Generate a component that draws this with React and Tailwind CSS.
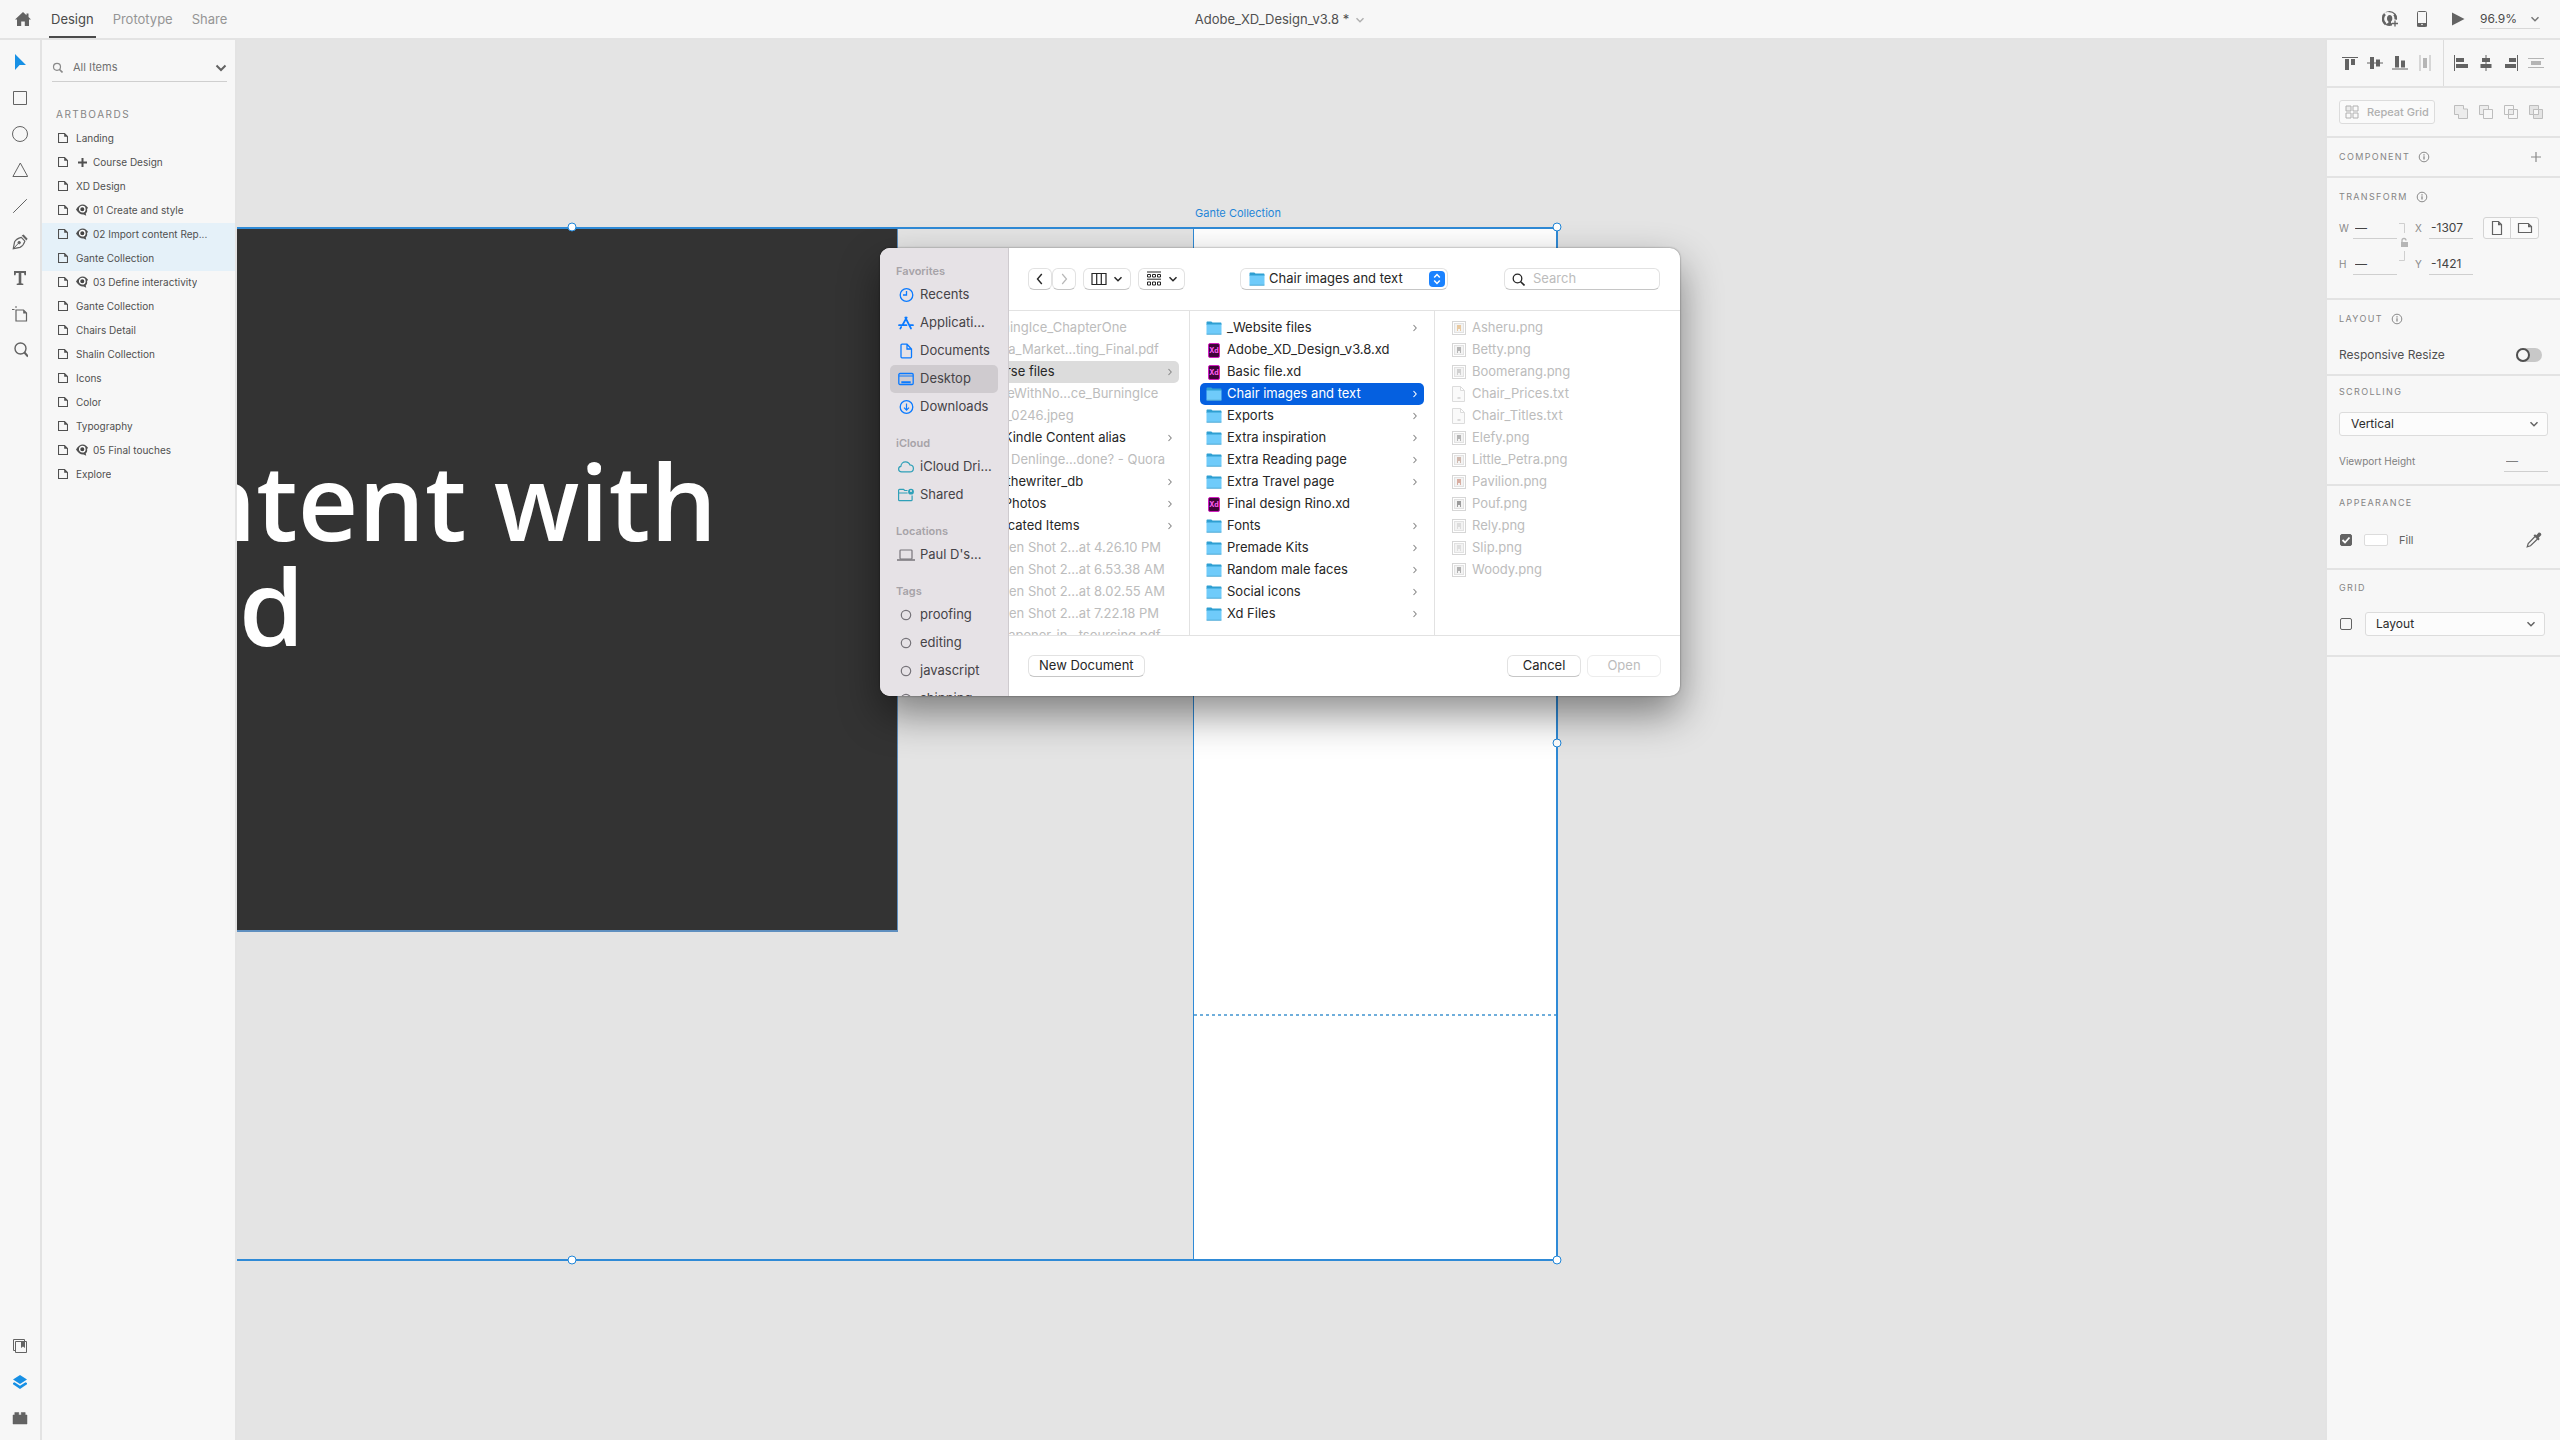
import React, { useState } from "react";

const tools = ["select", "rect", "ellipse", "polygon", "line", "pen", "text", "artboard", "zoom"];

const artboards = [
    { name: "Landing" },
    { name: "Course Design", mark: "plus" },
    { name: "XD Design" },
    { name: "01 Create and style", mark: "eye" },
    { name: "02 Import content Rep...", mark: "eye", selected: true },
    { name: "Gante Collection", selected: true },
    { name: "03 Define interactivity", mark: "eye" },
    { name: "Gante Collection" },
    { name: "Chairs Detail" },
    { name: "Shalin Collection" },
    { name: "Icons" },
    { name: "Color" },
    { name: "Typography" },
    { name: "05 Final touches", mark: "eye" },
    { name: "Explore" },
];

const sidebar = [
    {
        title: "Favorites",
        items: [
            { name: "Recents", icon: "clock" },
            { name: "Applicati...", icon: "apps" },
            { name: "Documents", icon: "doc" },
            { name: "Desktop", icon: "desktop" },
            { name: "Downloads", icon: "download" },
        ],
    },
    {
        title: "iCloud",
        items: [
            { name: "iCloud Dri...", icon: "cloud" },
            { name: "Shared", icon: "shared" },
        ],
    },
    { title: "Locations", items: [{ name: "Paul D's...", icon: "laptop" }] },
    {
        title: "Tags",
        items: [
            { name: "proofing", icon: "tag" },
            { name: "editing", icon: "tag" },
            { name: "javascript", icon: "tag" },
            { name: "shipping", icon: "tag" },
        ],
    },
];

const desktopFiles = [
    { name: "BurningIce_ChapterOne" },
    { name: "Mega_Market...ting_Final.pdf" },
    { name: "Course files", folder: true, open: true },
    { name: "TameWithNo...ce_BurningIce" },
    { name: "IMG_0246.jpeg" },
    { name: "My Kindle Content alias", folder: true },
    { name: "Paul Denlinge...done? - Quora" },
    { name: "samthewriter_db", folder: true },
    { name: "My Photos", folder: true },
    { name: "Relocated Items", folder: true },
    { name: "Screen Shot 2...at 4.26.10 PM" },
    { name: "Screen Shot 2...at 6.53.38 AM" },
    { name: "Screen Shot 2...at 8.02.55 AM" },
    { name: "Screen Shot 2...at 7.22.18 PM" },
    { name: "Singapener-in...tsourcing.pdf" },
];

const courseFiles = [
    "_Website files",
    "Adobe_XD_Design_v3.8.xd",
    "Basic file.xd",
    "Chair images and text",
    "Exports",
    "Extra inspiration",
    "Extra Reading page",
    "Extra Travel page",
    "Final design Rino.xd",
    "Fonts",
    "Premade Kits",
    "Random male faces",
    "Social icons",
    "Xd Files",
];

const chairFiles = [
    { name: "Asheru.png", tint: "#e8c9a0" },
    { name: "Betty.png", tint: "#b5b5b5" },
    { name: "Boomerang.png", tint: "#d0d0d0" },
    { name: "Chair_Prices.txt" },
    { name: "Chair_Titles.txt" },
    { name: "Elefy.png", tint: "#b5b5b5" },
    { name: "Little_Petra.png", tint: "#cfb8ae" },
    { name: "Pavilion.png", tint: "#d8aea2" },
    { name: "Pouf.png", tint: "#9c9c9c" },
    { name: "Rely.png", tint: "#dcdcdc" },
    { name: "Slip.png", tint: "#dedede" },
    { name: "Woody.png", tint: "#b0b0b0" },
];

const handles = [
    "left-[335px] top-[187px]",
    "left-[1320px] top-[187px]",
    "left-[1320px] top-[703px]",
    "left-[335px] top-[1220px]",
    "left-[1320px] top-[1220px]",
];

function Svg({ size = 16, box = 16, className = "", children }) {
    return (
        <svg width={size} height={size} viewBox={`0 0 ${box} ${box}`} fill="none" stroke="currentColor" className={`shrink-0 ${className}`} aria-hidden="true">
            {children}
        </svg>
    );
}

function Chevron({ className = "" }) {
    return (
        <Svg size={10} box={10} className={className}>
            <path d="M1.5 3.2 5 6.7l3.5-3.5" strokeWidth="1.5" />
        </Svg>
    );
}

function ToolIcon({ name }) {
    switch (name) {
        case "select":
            return <Svg className="text-[#1790e5]"><path d="M3 0v16l4.6-5H14z" fill="currentColor" stroke="none" /></Svg>;
        case "rect":
            return <Svg><path d="M1.5 1.5h13v13h-13z" /></Svg>;
        case "ellipse":
            return <Svg><circle cx="8" cy="8" r="7.5" /></Svg>;
        case "polygon":
            return <Svg><path d="M8.3 1 15.7 14.5H.9z" /></Svg>;
        case "line":
            return <Svg><path d="M1.2 14.8 14.8 1.2" /></Svg>;
        case "pen":
            return (
                <Svg>
                    <path d="M1.3 14.7 2.6 7.8C4 5.2 6.5 4 9.3 3.3l3.6 3.8c-.8 2.7-2.3 5-4.9 6.3z" strokeWidth="1.2" />
                    <path d="m1.5 14.5 5-5.3" />
                    <circle cx="7.2" cy="8.6" r="1.2" fill="currentColor" />
                    <path d="m9.7 1.5 1.9-1 4 4.2-1.2 1.9z" fill="currentColor" stroke="none" />
                </Svg>
            );
        case "text":
            return <Svg><path d="M2 1h12v4.2h-1.5L12 3H9.3v10.3l2 .4V15H4.7v-1.3l2-.4V3H4l-.5 2.2H2z" fill="currentColor" stroke="none" /></Svg>;
        case "artboard":
            return (
                <Svg>
                    <path d="M4 4h7.5l3 3v8H4z" strokeWidth="1.2" />
                    <path d="M11.2 4v3.5h3.5z" fill="currentColor" stroke="none" />
                    <path d="M4 0v2M0 3.5h2.5" />
                </Svg>
            );
        default:
            return <Svg><circle cx="8.5" cy="6.5" r="5.5" strokeWidth="1.4" /><path d="m12.5 10.5 3.5 4" strokeWidth="2" /></Svg>;
    }
}

function RowMark({ mark }) {
    if (mark === "plus") {
        return <Svg size={12} box={12} className="mr-[5px]"><path d="M6.5 2v9M2 6.5h9" strokeWidth="2" /></Svg>;
    }
    return (
        <Svg size={12} box={12} className="mr-[5px]">
            <path d="M0 5.5C2 2.2 4.3.5 6.8.5s3.7 1.3 5.2 3.3l-1 1.5c.5 1.5 0 3-1.3 4.2l.5 2.2-2.5-1.3C4.5 10.7 2 8.7.9 6.7z" fill="currentColor" stroke="none" />
            <circle cx="6.3" cy="5.2" r="2.7" fill="#444" stroke="#fff" strokeWidth="1.3" />
        </Svg>
    );
}

function InfoIcon() {
    return (
        <Svg size={12} box={12} className="text-[#8a8a8a]">
            <circle cx="6" cy="6" r="4.8" />
            <path d="M6 5.3v3.2M6 3.2v1.2" strokeWidth="1.3" />
        </Svg>
    );
}

function Folder() {
    return (
        <Svg>
            <path d="M.5 2.5c0-.6.4-1 1-1h3.8l1.2 1h8c.6 0 1 .4 1 1V5H.5z" fill="#2f9fd2" stroke="none" />
            <path d="M.5 4.5h15v9c0 .6-.4 1-1 1h-13c-.6 0-1-.4-1-1z" fill="#6fcbfa" stroke="none" />
            <path d="M.5 14.2h15" stroke="#4ba3cc" strokeWidth=".8" />
        </Svg>
    );
}

function XdFile() {
    return (
        <span className="mx-[2px] flex h-[15px] w-3 shrink-0 items-center justify-center rounded-[2px] border border-[#d21fc0] bg-[#3f0438] text-[7px] font-bold leading-none text-[#ff61f6]">
            Xd
        </span>
    );
}

function Thumb({ tint }) {
    if (!tint) {
        return (
            <Svg className="text-[#dcdcdc]">
                <path d="M1.5.5h8l4 4v11h-12zM9.5.5v4h4" fill="#fafafa" />
                <path d="M6.5 12h3" stroke="#bbb" />
            </Svg>
        );
    }
    return (
        <Svg className="text-[#d6d6d6]">
            <rect x="1.5" y="1.5" width="13" height="13" fill="#fff" />
            <rect x="3.5" y="3.5" width="9" height="9" fill="#f3f3f3" stroke="#e2e2e2" />
            <path d="M6 5h4v6H9V9H7v2H6z" fill={tint} stroke="none" />
        </Svg>
    );
}

function PlaceIcon({ name }) {
    switch (name) {
        case "clock":
            return <Svg className="text-[#0a7aff]"><circle cx="8.5" cy="8" r="6.3" strokeWidth="1.3" /><path d="M8.5 4v4H5" strokeWidth="1.3" /></Svg>;
        case "apps":
            return <Svg className="text-[#0a7aff]"><path d="M8.7 2.5 4.5 10M7.3 2.5l5.7 11M1 10.2h7.5M11.5 10.2H15M3.2 12l-.9 1.6" strokeWidth="1.7" strokeLinecap="round" /></Svg>;
        case "doc":
            return <Svg className="text-[#0a7aff]"><path d="M3 2.2c0-.6.4-1 1-1h5L13.5 6v7.8c0 .6-.4 1-1 1H4c-.6 0-1-.4-1-1zM9 1.2V6h4.5" strokeWidth="1.3" /></Svg>;
        case "desktop":
            return <Svg className="text-[#0a7aff]"><rect x=".8" y="2.5" width="14.4" height="11" rx="1.2" strokeWidth="1.3" /><path d="M1 5h14" strokeWidth="1.2" /><path d="M3.3 11.2h9.4" strokeWidth="2" /></Svg>;
        case "download":
            return <Svg className="text-[#0a7aff]"><circle cx="8.5" cy="8" r="6.3" strokeWidth="1.3" /><path d="M8.5 4.5v6.5M6 8.7l2.5 2.5L11 8.7" strokeWidth="1.2" /></Svg>;
        case "cloud":
            return <Svg className="text-[#2fa0b8]"><path d="M3.7 12.8C1.8 12.8.6 11.6.6 10c0-1.4.9-2.5 2.3-2.7C3 4.7 5 2.8 7.5 2.8c2.1 0 3.8 1.2 4.4 3.1 2 .2 3.5 1.5 3.5 3.500s-1.5 3.4-3.5 3.4z" strokeWidth="1.2" /></Svg>;
        case "shared":
            return (
                <Svg className="text-[#2fa0b8]">
                    <path d="M9.5 3.5H6.7L5.5 2.3h-4c-.5 0-.9.4-.9.9v9.6c0 .5.4.9.9.9h11.7c.5 0 .9-.4.9-.9V8.5M.6 6h9" strokeWidth="1.2" />
                    <circle cx="13" cy="4.7" r="2.9" fill="currentColor" stroke="none" />
                    <circle cx="13" cy="4" r="1" fill="#e6e2e6" stroke="none" />
                </Svg>
            );
        case "laptop":
            return <Svg size={18} box={18} className="-mx-px text-[#77747a]"><rect x="3" y="4" width="12" height="9" rx=".8" strokeWidth="1.2" /><path d="M0 14h18" strokeWidth="1.4" /></Svg>;
        default:
            return <Svg className="text-[#77747a]"><circle cx="8" cy="8" r="4.7" strokeWidth="1.2" /></Svg>;
    }
}

// Align and distribute buttons
const alignIcons = {
    top: <><path d="M0 2.5h16" /><path d="M3 4h4v11H3zM9 4h4v6H9z" fill="currentColor" stroke="none" /></>,
    middle: <><path d="M0 8h16" /><path d="M3 2h4v12H3zM9 4.5h4v7H9z" fill="currentColor" stroke="none" /></>,
    bottom: <><path d="M0 14h16" /><path d="M3 1h4v11.5H3zM9 5.5h4v7H9z" fill="currentColor" stroke="none" /></>,
    spreadX: <><path d="M3 0v16M13 0v16" /><path d="M6 3h4v10H6z" fill="currentColor" stroke="none" /></>,
    left: <><path d="M1.5 0v16" /><path d="M3 3h8v4H3zM3 9h12v4H3z" fill="currentColor" stroke="none" /></>,
    center: <><path d="M8 0v16" /><path d="M4 3h8v4H4zM2.5 9h11v4h-11z" fill="currentColor" stroke="none" /></>,
    right: <><path d="M14.5 0v16" /><path d="M6 3h7v4H6zM2 9h11v4H2z" fill="currentColor" stroke="none" /></>,
    spreadY: <><path d="M0 3.5h16M0 12.5h16" /><path d="M3 6h10v4H3z" fill="currentColor" stroke="none" /></>,
};

const booleanIcons = {
    Add: <path d="M1.5 1.5h9V5h4v9.5h-9v-4h-4z" fill="#ececec" />,
    Subtract: <><path d="M1.5 1.5h9v4h-5v5h-4z" fill="#ececec" /><path d="M5.5 5.5h9v9h-9z" /></>,
    Intersect: <><path d="M1.5 1.5h9v9h-9zM5.5 5.5h9v9h-9z" /><path d="M5.5 5.5h5v5h-5z" fill="#ececec" /></>,
    Exclude: <><path d="M1.5 1.5h9v9h-9zM5.5 5.5h9v9h-9z" fill="#e4e4e4" /><path d="M5.5 5.5h5v5h-5z" fill="#f7f7f7" /></>,
};

function Heading({ children, info }) {
    return (
        <h2 className="flex h-3 items-center gap-2 text-[9px] leading-3 tracking-[0.15em] text-[#858585]">
            {children}
            {info && <InfoIcon />}
        </h2>
    );
}

function Field({ label, value }) {
    return (
        <label className="flex items-center text-[10px] text-[#8a8a8a]">
            <span className="w-[14px]">{label}</span>
            <input type="text" defaultValue={value} className="h-[22px] w-11 border-b border-[#cfcfcf] bg-transparent pl-[2px] text-xs text-[#444] outline-none" />
        </label>
    );
}

function TopBar() {
    const [tab, setTab] = useState("Design");

    return (
        <header className="grid h-10 shrink-0 grid-cols-3 border-b-2 border-[#e3e3e3]">
            <div className="flex items-center">
                <button type="button" aria-label="Home" className="ml-[15px] mr-[18px] text-[#636363]">
                    <Svg><path d="M8 1 0 8.5h2V15h4.2v-4.5h3.6V15H14V8.5h2L13.5 6V2.5h-2V4.2z" fill="currentColor" stroke="none" /></Svg>
                </button>
                <nav className="flex h-full gap-[15px]">
                    {["Design", "Prototype", "Share"].map((name) => (
                        <button
                            key={name}
                            type="button"
                            onClick={() => setTab(name)}
                            className={`h-full border-b-2 px-[2px] pt-[3px] text-[13px] ${tab === name ? "border-[#4a4a4a] text-[#4a4a4a]" : "border-transparent text-[#959595]"}`}
                        >
                            {name}
                        </button>
                    ))}
                </nav>
            </div>
            <button type="button" className="flex items-center justify-center gap-[6px] pt-[2px] text-[13px] text-[#505050]">
                Adobe_XD_Design_v3.8 *
                <Chevron className="text-[#b0b0b0]" />
            </button>
            <div className="flex items-center justify-end pr-5 text-[#636363]">
                <button type="button" aria-label="Invite" className="mr-4">
                    <Svg>
                        <path d="M7.500 0a7.500 7.500 0 1 0 2.500 14.600V12.500l-1-.7v-1.300c.9-.8 1.300-1.800 1.300-3.100 0-2-1-3.300-2.600-3.300S5 5.400 5 7.400c0 1.300.5 2.300 1.400 3.100v1.300l-2.700 1.400A6.300 6.300 0 0 1 7.500 1.200 6.300 6.300 0 0 1 13.700 8.500H15A7.500 7.500 0 0 0 7.500 0z" fill="currentColor" stroke="none" />
                        <path d="M3.700 13.200A6.500 6.500 0 0 1 3 3.200M12.300 3.500a6 6 0 0 1 1.200 5" strokeWidth="2.400" />
                        <path d="M13 9.500v6M10 12.500h6" strokeWidth="1.300" />
                    </Svg>
                </button>
                <button type="button" aria-label="Device preview" className="mr-5">
                    <Svg><path d="M3.5 1.5c0-.6.4-1 1-1h7c.6 0 1 .4 1 1v13c0 .6-.4 1-1 1h-7c-.6 0-1-.4-1-1z" /><path d="M3 12h10v3.500H3z" fill="currentColor" stroke="none" /><circle cx="8" cy="13.500" r=".8" fill="#fff" stroke="none" /></Svg>
                </button>
                <button type="button" aria-label="Play" className="mr-[14px]">
                    <Svg><path d="M2 1.5v13L14.5 8z" fill="currentColor" stroke="none" /></Svg>
                </button>
                <button type="button" className="flex h-5 w-[60px] items-center justify-between border-b border-[#d8d8d8] text-xs text-[#4a4a4a]">
                    96.9%
                    <Chevron className="text-[#777]" />
                </button>
            </div>
        </header>
    );
}

function ToolRail() {
    return (
        <aside className="flex w-[42px] shrink-0 flex-col justify-between border-r-2 border-[#e3e3e3] pb-1 pt-1 text-[#636363]">
            <div>
                {tools.map((name) => (
                    <button key={name} type="button" aria-label={name} className="flex h-9 w-10 items-center justify-center">
                        <ToolIcon name={name} />
                    </button>
                ))}
            </div>
            <div>
                <button type="button" aria-label="Libraries" className="flex h-9 w-10 items-center justify-center">
                    <Svg><path d="M12.5 3.5v-2h-11v11h2M3.5 3.5h11v11h-11z" /><path d="M9 4h4v6l-2-1.5L9 10z" fill="currentColor" stroke="none" /></Svg>
                </button>
                <button type="button" aria-label="Layers" className="flex h-9 w-10 items-center justify-center text-[#1790e5]">
                    <Svg><path d="M8 1 15 5.5 8 10 1 5.5zM1 9l1.5-.8L8 11.700l5.500-3.500L15 9v1.200L8 15l-7-4.800z" fill="currentColor" stroke="none" /></Svg>
                </button>
                <button type="button" aria-label="Plugins" className="flex h-9 w-10 items-center justify-center">
                    <Svg><path d="M1 5h1.800V2.500h4V5h2.400V2.500h4V5H15v9H1z" fill="currentColor" stroke="currentColor" strokeLinejoin="round" strokeWidth=".5" /></Svg>
                </button>
            </div>
        </aside>
    );
}

function LayersPanel() {
    return (
        <aside className="w-[195px] shrink-0 border-r-2 border-[#e3e3e3]">
            <div className="ml-[10px] mr-2 mt-3 flex h-[30px] items-center border-b border-[#cfcfcf] pt-[2px] text-[#636363]">
                <Svg size={11} box={11} className="mr-[10px] text-[#8a8a8a]"><circle cx="5" cy="4.8" r="3.5" strokeWidth="1.2" /><path d="m7.5 7.500 3 3" strokeWidth="1.6" /></Svg>
                <input type="text" aria-label="Search layers" placeholder="All Items" className="w-0 grow bg-transparent text-[11px] outline-none placeholder:text-[#707070]" />
                <button type="button" aria-label="Filter">
                    <Svg size={12} box={12}><path d="M1.5 3.5 6 8l4.500-4.500" strokeWidth="2" /></Svg>
                </button>
            </div>
            <h2 className="ml-[14px] mt-[26px] h-[19px] text-[10px] leading-3 tracking-[0.15em] text-[#858585]">ARTBOARDS</h2>
            <ul>
                {artboards.map((item, i) => (
                    <li key={i} className={`flex h-6 items-center pb-[2px] pl-4 text-[10px] text-[#505050] ${item.selected ? "bg-[#e5f1f9]" : ""}`}>
                        <Svg size={10} box={10} className="mr-2"><path d="M.5.5h6l3 3v6h-9z" strokeWidth="1.1" /><path d="M6.2.5v3.300h3.300z" fill="currentColor" stroke="none" /></Svg>
                        {item.mark && <RowMark mark={item.mark} />}
                        <span className="truncate">{item.name}</span>
                    </li>
                ))}
            </ul>
        </aside>
    );
}

function Canvas() {
    return (
        <main className="relative grow overflow-hidden bg-[#e4e4e4]">
            <section className="absolute left-0 top-[188px] h-[704px] w-[661px] overflow-hidden border-b-2 border-r border-[#5f8fbf] bg-[#333] font-['Open_Sans','Noto_Sans',sans-serif] text-[105px] font-semibold leading-[105px] text-white">
                <h1 className="absolute right-[180px] top-[220px] whitespace-nowrap">ntent with</h1>
                <p className="absolute left-[2px] top-[325px]">d</p>
            </section>
            <span className="absolute left-[958px] top-[166px] text-[11px] leading-[14px] text-[#1f86d8]">Gante Collection</span>
            <section className="absolute left-[956px] top-[187px] h-[1034px] w-[364px] border-l border-[#2f8ad6] bg-white">
                <div className="mt-[787px] h-[2px] bg-[repeating-linear-gradient(90deg,#6faedb_0_3px,#fff_3px_6px)]" />
            </section>
            <div className="absolute left-[-100px] top-[187px] h-[1034px] w-[1421px] border-2 border-[#2f8ad6]" />
            {handles.map((pos) => (
                <span key={pos} className={`absolute size-[9px] -translate-x-1/2 -translate-y-1/2 rounded-full border border-[#1f86d8] bg-white ${pos}`} />
            ))}
        </main>
    );
}

function Inspector() {
    return (
        <aside className="w-[235px] shrink-0 border-l-2 border-[#e3e3e3] text-[#636363]">
            <div className="flex h-12 border-b-2 border-[#e3e3e3]">
                <div className="flex w-[117px] items-center gap-[9px] border-r border-[#dcdcdc] pl-[15px]">
                    {["top", "middle", "bottom", "spreadX"].map((name) => (
                        <button key={name} type="button" aria-label={name} className={name === "spreadX" ? "text-[#b5b5b5]" : ""}>
                            <Svg>{alignIcons[name]}</Svg>
                        </button>
                    ))}
                </div>
                <div className="flex items-center gap-[9px] pl-[9px]">
                    {["left", "center", "right", "spreadY"].map((name) => (
                        <button key={name} type="button" aria-label={name} className={name === "spreadY" ? "text-[#b5b5b5]" : ""}>
                            <Svg>{alignIcons[name]}</Svg>
                        </button>
                    ))}
                </div>
            </div>

            <div className="flex h-[50px] items-center border-b-2 border-[#e3e3e3] pl-3">
                <button type="button" className="mr-[18px] flex h-6 w-24 items-center gap-2 rounded-[3px] border border-[#dcdcdc] bg-[#fafafa] pl-[5px] text-[11px] font-medium text-[#b0b0b0]">
                    <Svg size={14} box={14}><path d="M1 1h5v5H1z" fill="#ececec" /><path d="M8 1h5v5H8zM1 8h5v5H1zM8 8h5v5H8z" /></Svg>
                    Repeat Grid
                </button>
                <div className="flex gap-[9px] text-[#bdbdbd]">
                    {Object.keys(booleanIcons).map((name) => (
                        <button key={name} type="button" aria-label={name}>
                            <Svg>{booleanIcons[name]}</Svg>
                        </button>
                    ))}
                </div>
            </div>

            <div className="flex h-10 items-center justify-between border-b-2 border-[#e3e3e3] pl-3 pr-[18px]">
                <Heading info>COMPONENT</Heading>
                <button type="button" aria-label="Add component" className="text-[#8a8a8a]">
                    <Svg size={12} box={12}><path d="M6 1v10M1 6h10" strokeWidth="1.2" /></Svg>
                </button>
            </div>

            <div className="h-[122px] border-b-2 border-[#e3e3e3] pl-3 pt-[13px]">
                <Heading info>TRANSFORM</Heading>
                <div className="mt-[14px] flex">
                    <div className="space-y-[14px]">
                        <Field label="W" value="—" />
                        <Field label="H" value="—" />
                    </div>
                    <svg width="14" height="44" viewBox="0 0 14 44" fill="none" stroke="#cfcfcf" className="mt-1" aria-hidden="true">
                        <path d="M2 2.500h5.500V12M7.500 30v9.500H2" />
                        <path d="M4 21h7v5H4z" fill="#b5b5b5" stroke="none" />
                        <path d="M5 21v-1.500a2 2 0 0 1 4 0" stroke="#b5b5b5" strokeWidth="1.3" />
                    </svg>
                    <div className="ml-1 space-y-[14px]">
                        <Field label="X" value="-1307" />
                        <Field label="Y" value="-1421" />
                    </div>
                    <div className="ml-[10px] flex h-[22px] rounded-[3px] border border-[#d4d4d4] bg-[#fafafa]">
                        <button type="button" aria-label="Portrait" className="flex w-[27px] items-center justify-center border-r border-[#d4d4d4]">
                            <Svg><path d="M3.5 1.5h6l3 3v10h-9z" strokeWidth="1.2" /><path d="M9 1.5v3.700h3.500z" fill="currentColor" stroke="none" /></Svg>
                        </button>
                        <button type="button" aria-label="Landscape" className="flex w-[27px] items-center justify-center">
                            <Svg><path d="M1.5 3.5h9.800l3.200 3v6h-13z" strokeWidth="1.2" /><path d="M11 3.5v3.700h3.500z" fill="currentColor" stroke="none" /></Svg>
                        </button>
                    </div>
                </div>
            </div>

            <div className="h-[76px] border-b-2 border-[#e3e3e3] pl-3 pt-[13px]">
                <Heading info>LAYOUT</Heading>
                <label className="relative mt-[22px] flex h-4 items-center justify-between pr-[18px] text-xs text-[#505050]">
                    Responsive Resize
                    <input type="checkbox" className="peer sr-only" />
                    <span className="flex h-[14px] w-[26px] rounded-full bg-[#c8c8c8] peer-checked:justify-end">
                        <span className="size-[14px] rounded-full border-2 border-[#505050] bg-[#f7f7f7]" />
                    </span>
                </label>
            </div>

            <div className="h-[110px] border-b-2 border-[#e3e3e3] pl-3 pr-3 pt-[10px]">
                <Heading>SCROLLING</Heading>
                <div className="relative mt-[14px]">
                    <select aria-label="Scrolling" className="block h-6 w-full appearance-none rounded-[3px] border border-[#dcdcdc] bg-[#fcfcfc] pl-[11px] text-xs text-[#2b2b2b]">
                        <option>Vertical</option>
                    </select>
                    <Chevron className="pointer-events-none absolute right-[9px] top-[7px]" />
                </div>
                <label className="mt-[14px] flex items-center justify-between text-[10px] text-[#808080]">
                    Viewport Height
                    <input type="text" defaultValue="—" className="h-[22px] w-11 border-b border-[#cfcfcf] bg-transparent pl-[2px] text-xs outline-none" />
                </label>
            </div>

            <div className="h-[84px] border-b-2 border-[#e3e3e3] pl-3 pr-[18px] pt-[11px]">
                <Heading>APPEARANCE</Heading>
                <div className="mt-[23px] flex h-4 items-center text-[11px] text-[#636363]">
                    <label className="relative ml-px flex">
                        <input type="checkbox" aria-label="Fill" defaultChecked className="peer size-3 appearance-none rounded-[2px] border border-[#636363] checked:bg-[#636363]" />
                        <Svg size={12} box={12} className="pointer-events-none absolute inset-0 hidden text-white peer-checked:block"><path d="m2.500 6 2.500 2.500 4.500-5" strokeWidth="1.8" /></Svg>
                    </label>
                    <button type="button" aria-label="Fill colour" className="ml-3 mr-[11px] h-3 w-6 rounded-[2px] border border-[#dcdcdc] bg-white" />
                    Fill
                    <button type="button" aria-label="Eyedropper" className="ml-auto">
                        <Svg><path d="M9 4.500 2.200 11.500l-1 3.300 3.300-1L11.500 7" strokeWidth="1.2" /><path d="M7.500 3.500 9 2.300l1.300 1L12.500.8c1-1 3.500.7 2.600 2.500l-2.400 2.500 1 1.300-1.400 1.400z" fill="currentColor" stroke="none" /></Svg>
                    </button>
                </div>
            </div>

            <div className="h-[87px] border-b-2 border-[#e3e3e3] pl-3 pr-[15px] pt-3">
                <Heading>GRID</Heading>
                <div className="mt-[18px] flex items-center">
                    <input type="checkbox" aria-label="Show grid" className="ml-px mr-[13px] size-3 appearance-none rounded-[2px] border border-[#636363]" />
                    <div className="relative grow">
                        <select aria-label="Grid" className="block h-6 w-full appearance-none rounded-[3px] border border-[#dcdcdc] bg-[#fcfcfc] pl-[10px] text-xs text-[#2b2b2b]">
                            <option>Layout</option>
                        </select>
                        <Chevron className="pointer-events-none absolute right-[9px] top-[7px]" />
                    </div>
                </div>
            </div>
        </aside>
    );
}

const pill = "rounded-[6px] border border-[#e2e2e2] border-b-[#c6c6c6] bg-white";

function RowChevron({ className }) {
    return <Svg size={8} box={8} className={className}><path d="m2.500 1 2.700 3-2.700 3" strokeWidth="1.1" /></Svg>;
}

function OpenDialog() {
    const [selected, setSelected] = useState("Chair images and text");

    return (
        <div role="dialog" aria-label="Open" className="flex h-[448px] w-[800px] overflow-hidden rounded-[10px] bg-white shadow-[0_0_2px_rgba(0,0,0,0.5),0_18px_40px_rgba(0,0,0,0.45)]">
            <aside className="w-[129px] shrink-0 overflow-hidden border-r border-[#cfcbcf] bg-[#e6e2e6] pl-[10px] pr-[10px] pt-[14px]">
                {sidebar.map((group) => (
                    <section key={group.title} className="pb-[13px]">
                        <h3 className="h-[19px] pl-[6px] text-[11px] font-semibold leading-[19px] text-[#a6a3a8]">{group.title}</h3>
                        {group.items.map((item) => (
                            <button
                                key={item.name}
                                type="button"
                                className={`flex h-7 w-[108px] items-center gap-[6px] whitespace-nowrap rounded-[5px] pl-2 text-[13px] text-[#454347] ${item.name === "Desktop" ? "bg-[#cfcbcf]" : ""}`}
                            >
                                <PlaceIcon name={item.icon} />
                                {item.name}
                            </button>
                        ))}
                    </section>
                ))}
            </aside>

            <div className="flex w-0 grow flex-col text-[13px] text-[#262626]">
                <div className="flex h-[63px] shrink-0 items-center border-b border-[#e2e2e2] pl-[19px] pr-5">
                    <button type="button" aria-label="Back" className={`flex h-[22px] w-6 items-center justify-center ${pill}`}>
                        <Svg size={12} box={12}><path d="M7.800 1 3.500 6l4.300 5" strokeWidth="1.4" /></Svg>
                    </button>
                    <button type="button" aria-label="Forward" className={`mr-[7px] flex h-[22px] w-6 items-center justify-center text-[#b8b8b8] ${pill}`}>
                        <Svg size={12} box={12}><path d="m4.200 1 4.300 5-4.300 5" strokeWidth="1.2" /></Svg>
                    </button>
                    <button type="button" aria-label="Column view" className={`mr-[7px] flex h-[22px] w-12 items-center justify-center gap-[6px] ${pill}`}>
                        <Svg><path d="M1 2.500h14v11H1zM5.700 2.500v11M10.300 2.500v11" strokeWidth="1.2" /></Svg>
                        <Chevron />
                    </button>
                    <button type="button" aria-label="Group by" className={`flex h-[22px] w-[47px] items-center justify-center gap-[6px] ${pill}`}>
                        <Svg><path d="M1 1h14M1 8.200h14" strokeWidth="1" /><path d="M1.500 3.500h3V6h-3zM6.500 3.500h3V6h-3zM11.500 3.500h3V6h-3zM1.500 11h3v3h-3zM6.500 11h3v3h-3zM11.500 11h3v3h-3z" /></Svg>
                        <Chevron />
                    </button>
                    <button type="button" className={`ml-auto flex h-[22px] w-[208px] items-center gap-1 pl-2 pr-[2px] ${pill}`}>
                        <Folder />
                        Chair images and text
                        <span className="ml-auto flex size-4 items-center justify-center rounded-[4px] bg-[#1a82ff] text-white">
                            <Svg size={12} box={12}><path d="m3.200 4.500 2.800-3 2.800 3M3.200 7.500l2.800 3 2.800-3" strokeWidth="1.5" /></Svg>
                        </span>
                    </button>
                    <label className={`ml-14 flex h-[22px] w-[156px] items-center gap-2 pl-[7px] ${pill}`}>
                        <Svg size={13} box={13}><circle cx="5.500" cy="5.500" r="4.300" strokeWidth="1.3" /><path d="m8.700 8.700 3.800 3.800" strokeWidth="1.6" /></Svg>
                        <input type="search" aria-label="Search" placeholder="Search" className="w-0 grow bg-transparent outline-none placeholder:text-[#bcbcbc]" />
                    </label>
                </div>

                <div className="flex h-0 grow overflow-hidden">
                    <div className="w-[181px] shrink-0 overflow-hidden border-r border-[#e2e2e2] pr-[10px] pt-[6px]">
                        <ul className="-ml-[28px]">
                            {desktopFiles.map((file) => (
                                <li key={file.name} className={`flex h-[22px] items-center justify-between whitespace-nowrap rounded-[5px] pr-[5px] ${file.open ? "bg-[#dcdcdc]" : ""} ${file.folder ? "" : "text-[#bcbcbc]"}`}>
                                    {file.name}
                                    {file.folder && <RowChevron className="text-[#8a8a8a]" />}
                                </li>
                            ))}
                        </ul>
                    </div>
                    <ul className="w-[245px] shrink-0 border-r border-[#e2e2e2] pl-[10px] pr-[10px] pt-[6px]">
                        {courseFiles.map((name) => {
                            const isFolder = !name.endsWith(".xd");
                            const isSelected = name === selected;
                            return (
                                <li key={name}>
                                    <button
                                        type="button"
                                        onClick={() => setSelected(name)}
                                        className={`flex h-[22px] w-full items-center gap-[5px] rounded-[5px] pl-[6px] pr-[5px] ${isSelected ? "bg-[#0560e0] text-white" : ""}`}
                                    >
                                        {isFolder ? <Folder /> : <XdFile />}
                                        {name}
                                        {isFolder && <RowChevron className={`ml-auto ${isSelected ? "text-white" : "text-[#8a8a8a]"}`} />}
                                    </button>
                                </li>
                            );
                        })}
                    </ul>
                    <ul className="grow pl-4 pt-[6px]">
                        {chairFiles.map((file) => (
                            <li key={file.name} className="flex h-[22px] items-center gap-[5px] text-[#bcbcbc]">
                                <Thumb tint={file.tint} />
                                {file.name}
                            </li>
                        ))}
                    </ul>
                </div>

                <div className="flex h-[61px] shrink-0 items-center border-t border-[#e2e2e2] pl-[19px] pr-[19px]">
                    <button type="button" className={`h-[22px] px-[10px] ${pill}`}>New Document</button>
                    <button type="button" className={`ml-auto h-[22px] w-[74px] ${pill}`}>Cancel</button>
                    <button type="button" disabled className="ml-[6px] h-[22px] w-[74px] rounded-[6px] border border-[#ececec] text-[#bcbcbc]">Open</button>
                </div>
            </div>
        </div>
    );
}

export default function App() {
    return (
        <div className="relative flex h-screen flex-col overflow-hidden bg-[#f7f7f7] font-['Inter','Liberation_Sans',sans-serif]">
            <TopBar />
            <div className="flex min-h-0 grow">
                <ToolRail />
                <LayersPanel />
                <Canvas />
                <Inspector />
            </div>
            <div className="pointer-events-none absolute inset-x-0 top-[248px] flex justify-center">
                <div className="pointer-events-auto">
                    <OpenDialog />
                </div>
            </div>
        </div>
    );
}
